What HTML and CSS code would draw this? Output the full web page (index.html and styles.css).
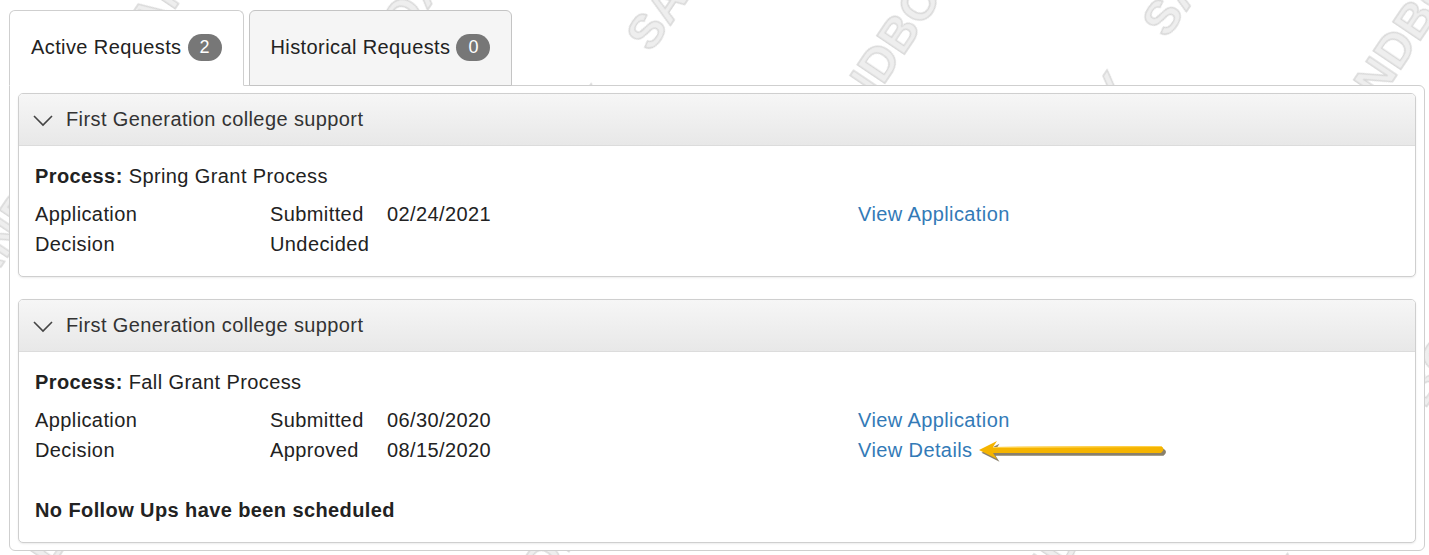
FILE: index.html
```html
<!DOCTYPE html>
<html lang="en">
<head>
  <meta charset="UTF-8">
  <meta name="viewport" content="width=device-width, initial-scale=1.0">
  <title>Requests</title>
  <link rel="stylesheet" href="styles.css">
</head>
<body>
  <!-- Sandbox watermark behind the page -->
  <svg class="watermark" aria-hidden="true">
    <defs>
      <pattern id="wm" width="300" height="210" patternUnits="userSpaceOnUse" patternTransform="rotate(-56) translate(20 30)">
        <text x="0" y="120" font-family="Liberation Sans, Arial, sans-serif" font-weight="bold" font-size="48" fill="#eeeeee" stroke="#d8d8d8" stroke-width="1.4">SANDBOX</text>
      </pattern>
    </defs>
    <rect width="100%" height="100%" fill="url(#wm)"></rect>
  </svg>

  <div class="requests">
    <ul class="tabs">
      <li class="tab active">Active Requests <span class="badge">2</span></li>
      <li class="tab">Historical Requests <span class="badge">0</span></li>
    </ul>

    <div class="tab-pane">
      <!-- Spring request -->
      <div class="panel">
        <div class="panel-heading">
          <svg class="chevron" width="20" height="12" viewBox="0 0 20 12"><path d="M1 1 L10 10 L19 1" fill="none" stroke="#444" stroke-width="1.6"/></svg>
          First Generation college support
        </div>
        <div class="panel-body">
          <p class="process"><b>Process:</b> Spring Grant Process</p>
          <div class="steps">
            <span>Application</span><span>Submitted</span><span>02/24/2021</span><a href="#">View Application</a>
            <span>Decision</span><span>Undecided</span><span></span><span></span>
          </div>
        </div>
      </div>

      <!-- Fall request -->
      <div class="panel">
        <div class="panel-heading">
          <svg class="chevron" width="20" height="12" viewBox="0 0 20 12"><path d="M1 1 L10 10 L19 1" fill="none" stroke="#444" stroke-width="1.6"/></svg>
          First Generation college support
        </div>
        <div class="panel-body">
          <p class="process"><b>Process:</b> Fall Grant Process</p>
          <div class="steps">
            <span>Application</span><span>Submitted</span><span>06/30/2020</span><a href="#">View Application</a>
            <span>Decision</span><span>Approved</span><span>08/15/2020</span>
            <span class="details"><a href="#">View Details</a>
              <svg class="arrow" width="192" height="24" viewBox="0 0 192 24">
                <path d="M3 12 L21 3 L17 9 L185 8 Q190 11 185 15 L17 15 L21 21 Z" fill="#3a2c08" opacity="0.6" transform="translate(1.5 1.8)"/>
                <path d="M2 11 L20 2 L16 8 L184 7 Q189 10 184 14 L16 14 L20 20 Z" fill="#f5b400"/>
                <path d="M16 8.5 L184 7.5" stroke="#ffd24a" stroke-width="1.2"/>
              </svg>
            </span>
          </div>
          <p class="followups">No Follow Ups have been scheduled</p>
        </div>
      </div>
    </div>
  </div>
</body>
</html>
```

FILE: styles.css
```css
body {
  font-family: "Liberation Sans", Arial, sans-serif;
  font-size: 20px;
  letter-spacing: 0.4px;
  color: #222;
  margin: 0;
  padding: 10px 4px 5px 9px;
  background: #fff;
  position: relative;
  height: 540px;
  overflow: hidden;
}

.watermark {
  position: absolute;
  top: 0;
  left: 0;
  width: 100%;
  height: 100%;
  z-index: 0;
}

.requests {
  position: relative;
  z-index: 1;
}

.tabs {
  display: flex;
  align-items: flex-end;
  list-style: none;
  margin: 0 0 -1px 0;
  padding: 0;
}

.tab {
  display: flex;
  align-items: center;
  box-sizing: border-box;
  height: 76px;
  padding: 0 21px 2px 21px;
  margin-right: 5px;
  background: #f5f5f5;
  border: 1px solid #c4c4c4;
  border-radius: 6px 6px 0 0;
  color: #222;
}

.tab.active {
  background: #fff;
  border-color: #cfcfcf;
  border-bottom-color: #fff;
}

.badge {
  display: inline-block;
  margin-left: 6px;
  min-width: 10px;
  padding: 0 12px;
  line-height: 27px;
  font-size: 18px;
  letter-spacing: 0;
  color: #fff;
  background: #777;
  border-radius: 14px;
  text-align: center;
}

.tab-pane {
  background: #fff;
  border: 1px solid #cfcfcf;
  border-radius: 0 6px 6px 6px;
  padding: 7px 8px 7px 8px;
}

.panel {
  border: 1px solid #cfcfcf;
  border-radius: 5px;
  box-shadow: 0 1px 2px rgba(0, 0, 0, 0.08);
  margin-bottom: 22px;
  background: #fff;
}

.panel:last-child {
  margin-bottom: 0;
}

.panel-heading {
  display: flex;
  align-items: center;
  height: 51px;
  padding-left: 14px;
  background: linear-gradient(#f6f6f6, #e8e8e8);
  border-bottom: 1px solid #dcdcdc;
  border-radius: 4px 4px 0 0;
  color: #333;
}

.chevron {
  margin-right: 13px;
  margin-top: 2px;
}

.panel-body {
  padding: 15px 16px 17px 16px;
  line-height: 30px;
}

.process {
  margin: 0 0 8px 0;
}

.steps {
  display: grid;
  grid-template-columns: 235px 117px 471px auto;
}

.steps a,
.details a {
  color: #337ab7;
  text-decoration: none;
}

.details {
  display: flex;
  align-items: center;
}

.arrow {
  margin-left: 5px;
  margin-top: 1px;
}

.followups {
  margin: 30px 0 0 0;
  font-weight: bold;
}
```
